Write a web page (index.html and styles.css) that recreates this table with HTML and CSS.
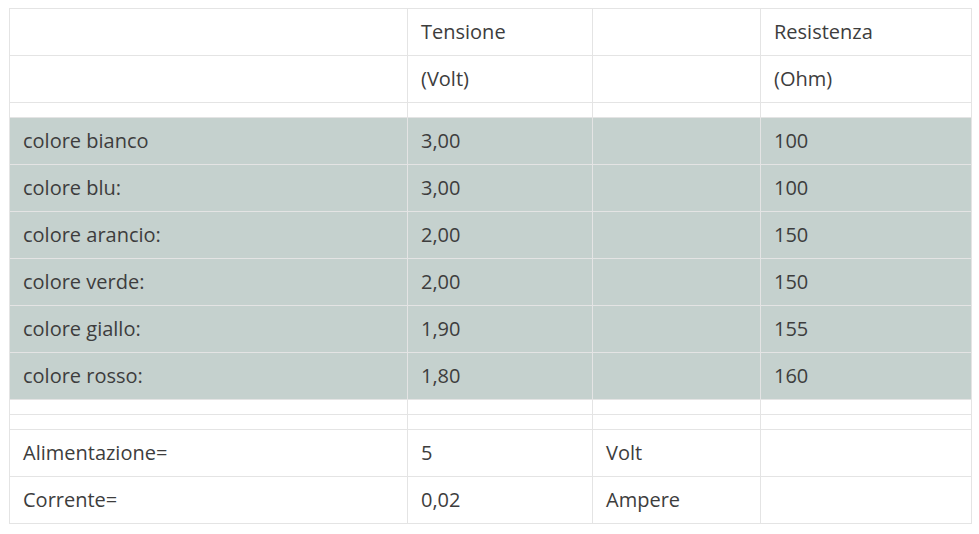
FILE: index.html
```html
<!DOCTYPE html>
<html>
<head>
<meta charset="utf-8">
<link rel="stylesheet" href="styles.css">
</head>
<body>
<table class="data">
  <colgroup>
    <col class="c1"><col class="c2"><col class="c3"><col class="c4">
  </colgroup>
  <tbody>
    <tr><td></td><td>Tensione</td><td></td><td>Resistenza</td></tr>
    <tr><td></td><td>(Volt)</td><td></td><td>(Ohm)</td></tr>
    <tr class="empty"><td></td><td></td><td></td><td></td></tr>
    <tr class="shade"><td>colore bianco</td><td>3,00</td><td></td><td>100</td></tr>
    <tr class="shade"><td>colore blu:</td><td>3,00</td><td></td><td>100</td></tr>
    <tr class="shade"><td>colore arancio:</td><td>2,00</td><td></td><td>150</td></tr>
    <tr class="shade"><td>colore verde:</td><td>2,00</td><td></td><td>150</td></tr>
    <tr class="shade"><td>colore giallo:</td><td>1,90</td><td></td><td>155</td></tr>
    <tr class="shade"><td>colore rosso:</td><td>1,80</td><td></td><td>160</td></tr>
    <tr class="empty"><td></td><td></td><td></td><td></td></tr>
    <tr class="empty"><td></td><td></td><td></td><td></td></tr>
    <tr><td>Alimentazione=</td><td>5</td><td>Volt</td><td></td></tr>
    <tr><td>Corrente=</td><td>0,02</td><td>Ampere</td><td></td></tr>
  </tbody>
</table>
</body>
</html>
```
FILE: styles.css
```css
html, body {
  margin: 0;
  padding: 0;
  background: #ffffff;
}
body {
  padding: 8px 0 0 9px;
  font-family: "Open Sans", "Liberation Sans", sans-serif;
  font-size: 20px;
  color: #3d3d3d;
}
.data {
  border-collapse: collapse;
  table-layout: fixed;
  width: 962px;
}
.c1 { width: 398px; }
.c2 { width: 185px; }
.c3 { width: 168px; }
.c4 { width: 211px; }
.data td {
  border: 1px solid #e4e4e4;
  padding: 7px 13px;
  line-height: 32px;
  height: 32px;
  vertical-align: middle;
  white-space: nowrap;
}
.data tr.empty td {
  height: 0;
  line-height: 0;
  padding: 7px 13px 7px;
}
.data tr.shade td {
  background: #c5d1ce;
}
```
